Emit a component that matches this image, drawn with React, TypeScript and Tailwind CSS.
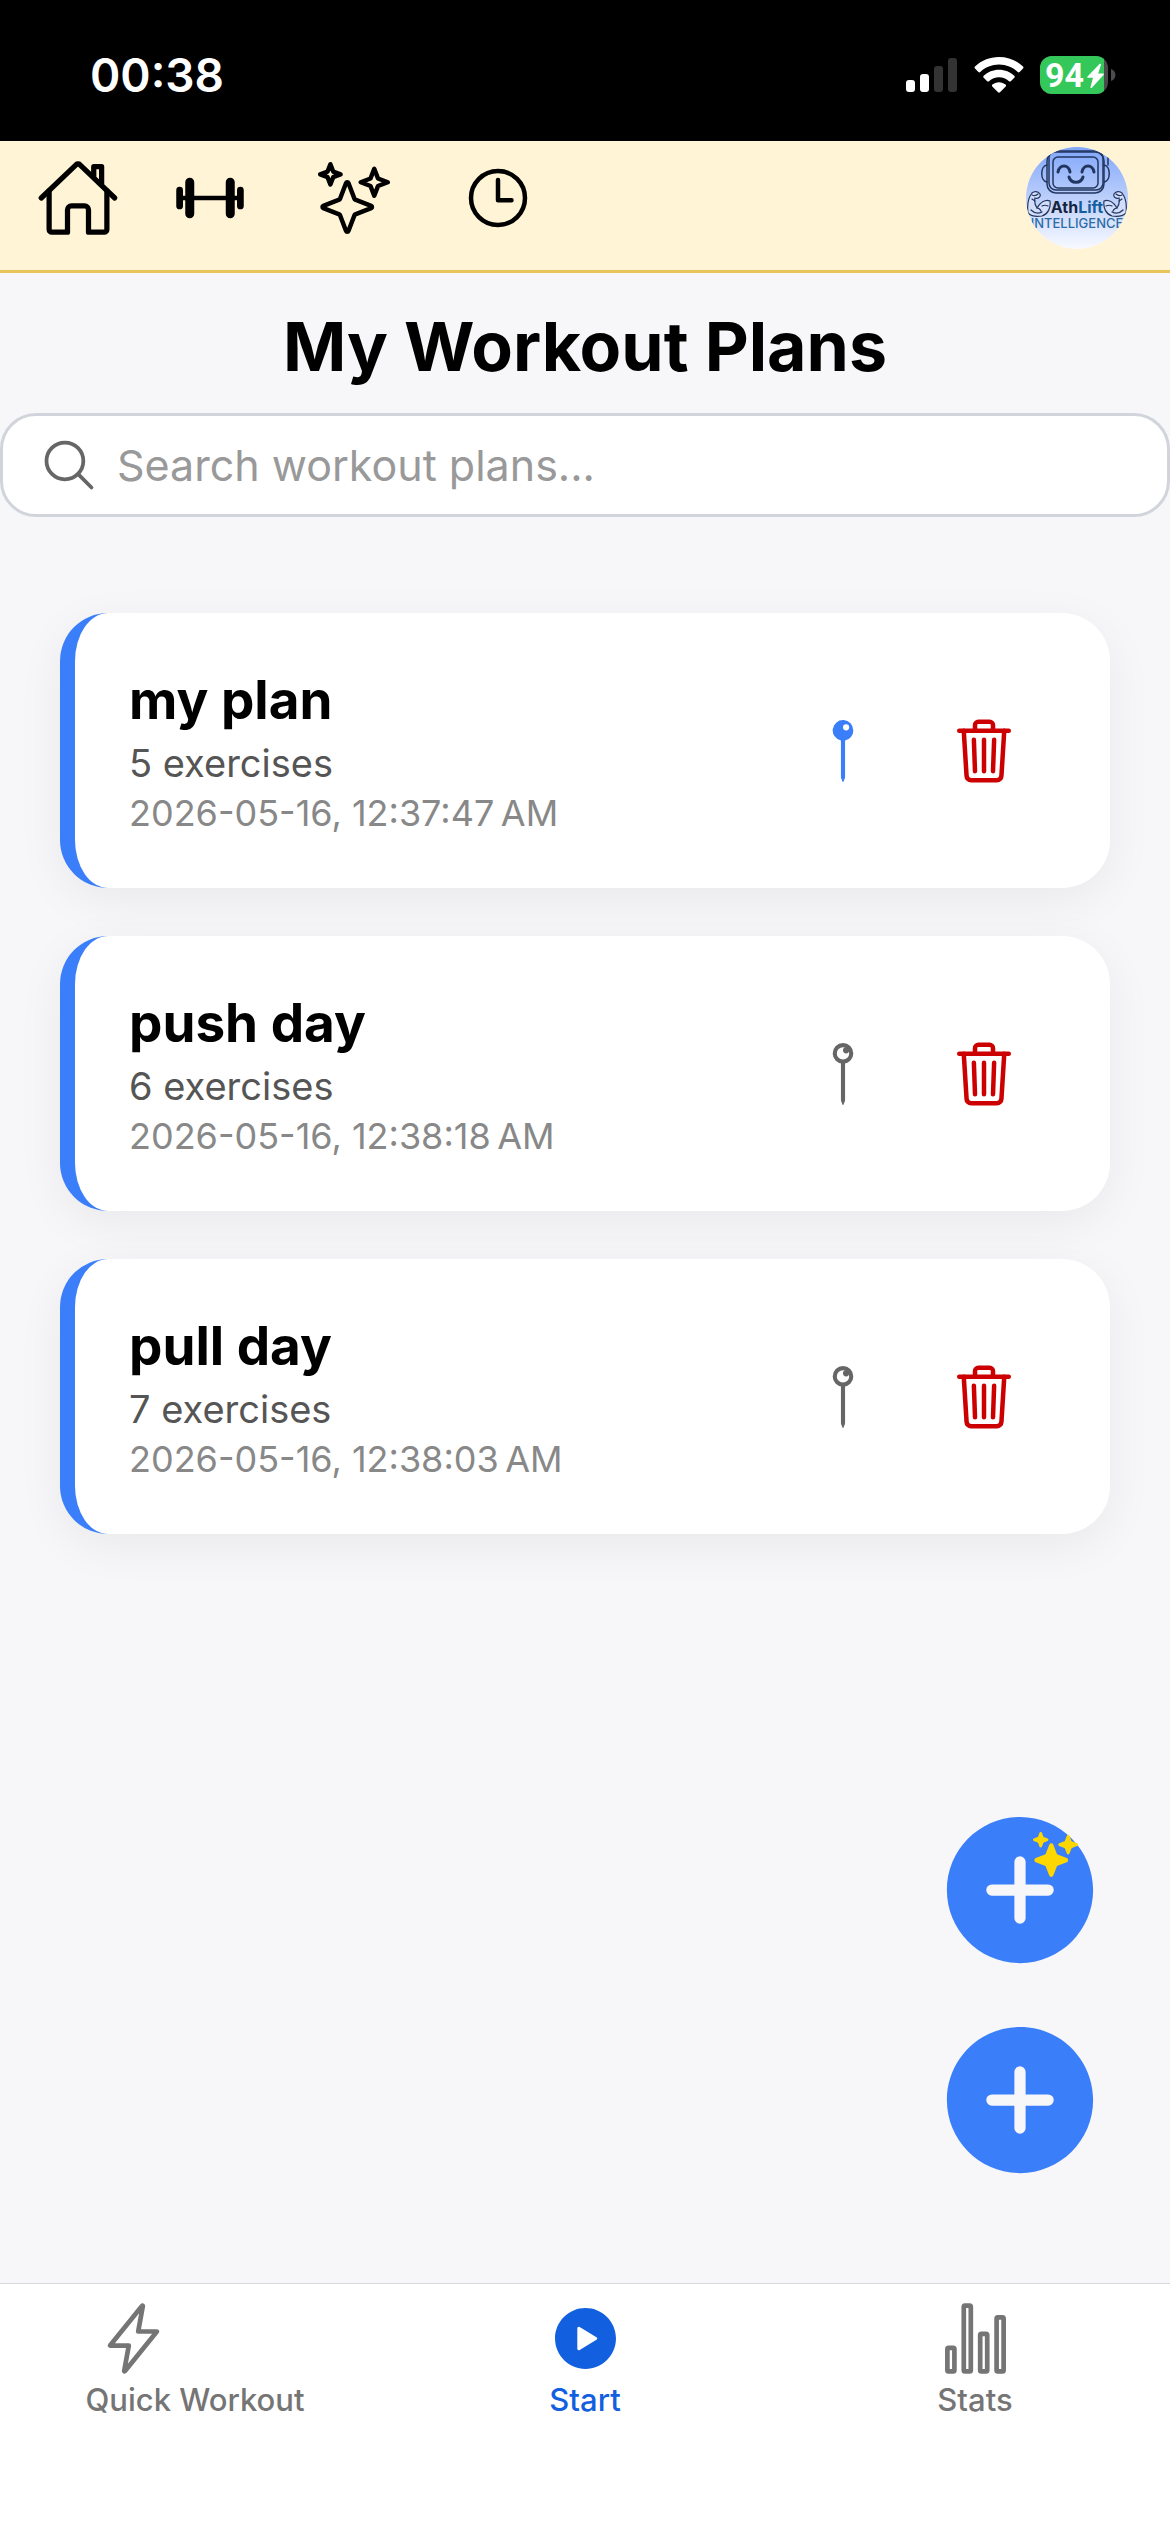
import React, { useState } from 'react';
import {
    IoAddCircle,
    IoBarbellOutline,
    IoFlashOutline,
    IoHomeOutline,
    IoPin,
    IoPinOutline,
    IoPlayCircle,
    IoSearchOutline,
    IoSparkles,
    IoSparklesOutline,
    IoStatsChartOutline,
    IoTimeOutline,
    IoTrashOutline,
} from 'react-icons/io5';

interface Plan {
    id: number;
    name: string;
    exercises: number;
    createdAt: string;
    pinned: boolean;
}

const initialPlans: Plan[] = [
    { id: 1, name: 'my plan', exercises: 5, createdAt: '2026-05-16, 12:37:47\u202fAM', pinned: true },
    { id: 2, name: 'push day', exercises: 6, createdAt: '2026-05-16, 12:38:18\u202fAM', pinned: false },
    { id: 3, name: 'pull day', exercises: 7, createdAt: '2026-05-16, 12:38:03\u202fAM', pinned: false },
];

const StatusBar = () => (
    <div className="flex h-[141px] items-center justify-between bg-black pt-2 pr-[54px] pl-[90px] text-white">
        <span className="text-[46px] leading-none font-semibold">00:38</span>
        <div className="flex items-center gap-4">
            {/* Cell signal */}
            <svg width="52" height="36" viewBox="0 0 52 36">
                <rect x="0" y="23" width="9" height="12" rx="3" fill="#fff" />
                <rect x="14" y="17" width="9" height="18" rx="3" fill="#fff" />
                <rect x="28" y="9" width="9" height="26" rx="3" fill="#333" />
                <rect x="42" y="1" width="9" height="34" rx="3" fill="#333" />
            </svg>
            {/* Wifi */}
            <svg width="50" height="36" viewBox="0 0 50 36" fill="#fff">
                <path d="M25 0C15.600 0 7 3.600 1 9.500c-.6.600-.6 1.400 0 2l3.400 3.500c.5.500 1.300.500 1.900 0C11.200 10.400 17.800 7.600 25 7.600s13.800 2.800 18.700 7.400c.6.500 1.400.5 1.900 0l3.400-3.500c.6-.6.6-1.400 0-2C43 3.600 34.400 0 25 0z" />
                <path d="M25 12.800c-5.900 0-11.300 2.300-15.300 6-.6.500-.6 1.300 0 1.900l3.500 3.500c.5.500 1.300.500 1.800 0 2.700-2.400 6.200-3.900 10-3.900s7.300 1.500 10 3.900c.5.500 1.300.5 1.800 0l3.500-3.500c.6-.6.6-1.400 0-1.900-4-3.700-9.400-6-15.300-6z" />
                <path d="M25 25.200c-2.500 0-4.800.9-6.600 2.400-.6.500-.6 1.300-.1 1.800l5.700 5.800c.6.600 1.400.6 2 0l5.700-5.800c.5-.5.500-1.300-.1-1.800-1.800-1.500-4.100-2.400-6.600-2.400z" />
            </svg>
            {/* Battery */}
            <svg width="76" height="38" viewBox="0 0 76 38">
                <defs>
                    <clipPath id="battery">
                        <rect width="68" height="38" rx="12" />
                    </clipPath>
                </defs>
                <g clipPath="url(#battery)">
                    <rect width="68" height="38" fill="#4b4b4d" />
                    <rect width="64" height="38" fill="#34c759" />
                </g>
                <path d="M71 13c3 1 4.500 3.500 4.500 6S74 24 71 25z" fill="#4b4b4d" />
                <text x="5" y="31" fontFamily="Roboto, sans-serif" fontSize="34" fontWeight="700" fill="#fff">94</text>
                <path d="M59.500 8 47.500 20.500c-.5.600-.2 1.300.5 1.300h5l-2.500 9.200c-.2.900.8 1.400 1.400.7L63.500 19c.6-.7.300-1.400-.5-1.400h-4.800l2.800-8.800c.2-.9-.8-1.400-1.500-.8z" fill="#fff" />
            </svg>
        </div>
    </div>
);

const AppLogo = () => (
    <svg width="102" height="102" viewBox="0 0 102 102" role="img" aria-label="AthLift Intelligence">
        <defs>
            <linearGradient id="logoBg" x1="0" y1="0" x2="0" y2="1">
                <stop offset="0" stopColor="#80a6fb" />
                <stop offset="0.5" stopColor="#bccffb" />
                <stop offset="1" stopColor="#f8faff" />
            </linearGradient>
            <clipPath id="logoClip">
                <circle cx="51" cy="51" r="51" />
            </clipPath>
            <g id="arm">
                <path d="M2 66c-1-8 0-15 4-20 2-2 6-2 8 1 1 3-2 5-5 4-1 4 0 7 2 10 3-5 8-9 13-7 1 7-2 13-8 15-6 1-11 0-14-3z" fill="#d3defb" />
                <path d="M6 48c2 1 4 1 6-1M6 52l3 2M5 63c3 3 7 4 11 2M11 61c2 0 3 1 4 3M16 59c2-1 4-1 6 0" />
            </g>
        </defs>
        <g clipPath="url(#logoClip)">
            <rect width="102" height="102" fill="url(#logoBg)" />
            <g fill="none" stroke="#22365f" strokeWidth="1.500" strokeLinecap="round">
                <rect x="21" y="5" width="57" height="41" rx="9" />
                <rect x="23" y="4" width="54" height="39" rx="7" />
                <rect x="27" y="10" width="45" height="31" rx="5" />
                <path d="M21 18c-7 1-7 16 0 17M78 18c7 1 7 16 0 17M82 8v10" />
                <path d="M32 25c1-8 11-8 12 0M56 25c1-8 11-8 12 0M43 30c2 7 12 7 14 0" strokeWidth="3" />
                <use href="#arm" strokeWidth="1.200" />
                <use href="#arm" strokeWidth="1.200" transform="translate(102 0) scale(-1 1)" />
            </g>
            <text x="51" y="66" fontSize="16" fontWeight="700" textAnchor="middle" fill="#16243f">
                Ath<tspan fill="#155e9e">Lift</tspan>
            </text>
            <text x="51" y="81" fontSize="13" fontWeight="500" textAnchor="middle" fill="#2c6ca6">INTELLIGENCE</text>
        </g>
    </svg>
);

const Header = () => (
    <header className="flex h-[132px] items-start justify-between border-b-3 border-[#e8c35a] bg-[#fff5d6] pt-1.5 pr-[42px] pl-[18px]">
        <nav className="flex h-[102px] items-center text-black">
            <button className="flex w-[120px] justify-center" aria-label="Home">
                <IoHomeOutline size={84} />
            </button>
            <button className="flex w-36 justify-center" aria-label="Exercises">
                <IoBarbellOutline size={72} />
            </button>
            <button className="flex w-36 justify-center" aria-label="AI coach">
                <IoSparklesOutline size={72} />
            </button>
            <button className="flex w-36 justify-center" aria-label="History">
                <IoTimeOutline size={72} />
            </button>
        </nav>
        <AppLogo />
    </header>
);

interface PlanCardProps {
    plan: Plan;
    onTogglePin: (id: number) => void;
    onDelete: (id: number) => void;
}

const PlanCard: React.FC<PlanCardProps> = ({ plan, onTogglePin, onDelete }) => (
    <li className="flex items-center justify-between rounded-[48px] border-l-15 border-[#3b7ef9] bg-white py-[52px] pr-[90px] pl-[54px] shadow-[0_12px_48px_rgba(0,0,0,0.06)]">
        <div>
            <h2 className="text-[53px] leading-[70px] font-bold text-black">{plan.name}</h2>
            <p className="text-[38px] leading-14 text-[#555]">{plan.exercises} exercises</p>
            <p className="text-[36px] leading-[45px] text-[#888]">{plan.createdAt}</p>
        </div>
        <div className="flex items-center gap-[72px]">
            <button
                className={plan.pinned ? 'text-[#3b7ef9]' : 'text-[#666]'}
                aria-label={plan.pinned ? 'Unpin plan' : 'Pin plan'}
                onClick={() => onTogglePin(plan.id)}
            >
                {plan.pinned ? <IoPin size={66} /> : <IoPinOutline size={66} />}
            </button>
            <button className="text-[#cc0000]" aria-label="Delete plan" onClick={() => onDelete(plan.id)}>
                <IoTrashOutline size={72} />
            </button>
        </div>
    </li>
);

const TabBar = () => (
    <nav className="grid h-[249px] grid-cols-3 items-start border-t border-[#d8d8d8] bg-white pt-[17px] text-[31px] leading-9 font-medium text-[#757575]">
        <a href="#quick" className="flex flex-col items-center gap-1.5">
            <IoFlashOutline size={75} className="mr-31" />
            Quick Workout
        </a>
        <a href="#start" className="flex flex-col items-center gap-1.5 text-[#1260e0]">
            <IoPlayCircle size={75} />
            Start
        </a>
        <a href="#stats" className="flex flex-col items-center gap-1.5">
            <IoStatsChartOutline size={75} />
            Stats
        </a>
    </nav>
);

const App = () => {
    const [plans, setPlans] = useState(initialPlans);
    const [query, setQuery] = useState('');

    const togglePin = (id: number) => {
        setPlans(plans.map((p) => (p.id === id ? { ...p, pinned: !p.pinned } : p)));
    };

    const deletePlan = (id: number) => {
        setPlans(plans.filter((p) => p.id !== id));
    };

    const visible = plans.filter((p) => p.name.toLowerCase().includes(query.toLowerCase()));

    return (
        <div className="flex min-h-screen flex-col bg-[#f7f7fa] font-['Inter',sans-serif]">
            <StatusBar />
            <Header />

            <main className="flex flex-1 flex-col">
                <h1 className="pt-[30px] text-center text-[68px] leading-[86px] font-bold text-black">My Workout Plans</h1>

                {/* Search */}
                <label className="mt-6 flex h-[104px] items-center gap-[18px] rounded-[36px] border-3 border-[#d1d5db] bg-white px-9">
                    <IoSearchOutline size={60} className="text-[#666]" />
                    <input
                        type="text"
                        aria-label="Search workout plans"
                        placeholder="Search workout plans..."
                        className="flex-1 text-[43px] text-black outline-none placeholder:text-[#999]"
                        value={query}
                        onChange={(e) => setQuery(e.target.value)}
                    />
                </label>

                <ul className="mt-24 flex flex-col gap-12 px-[60px]">
                    {visible.map((plan) => (
                        <PlanCard key={plan.id} plan={plan} onTogglePin={togglePin} onDelete={deletePlan} />
                    ))}
                </ul>

                {/* Floating actions */}
                <div className="mt-auto mb-[93px] flex flex-col gap-[30px] self-end pr-[60px] text-[#3b7ef9]">
                    <button className="relative" aria-label="Generate plan with AI">
                        <IoAddCircle size={180} />
                        <IoSparkles size={45} className="absolute top-8 right-8 text-[#ffd700]" />
                    </button>
                    <button aria-label="Add plan">
                        <IoAddCircle size={180} />
                    </button>
                </div>
            </main>

            <TabBar />
        </div>
    );
};

export default App;
